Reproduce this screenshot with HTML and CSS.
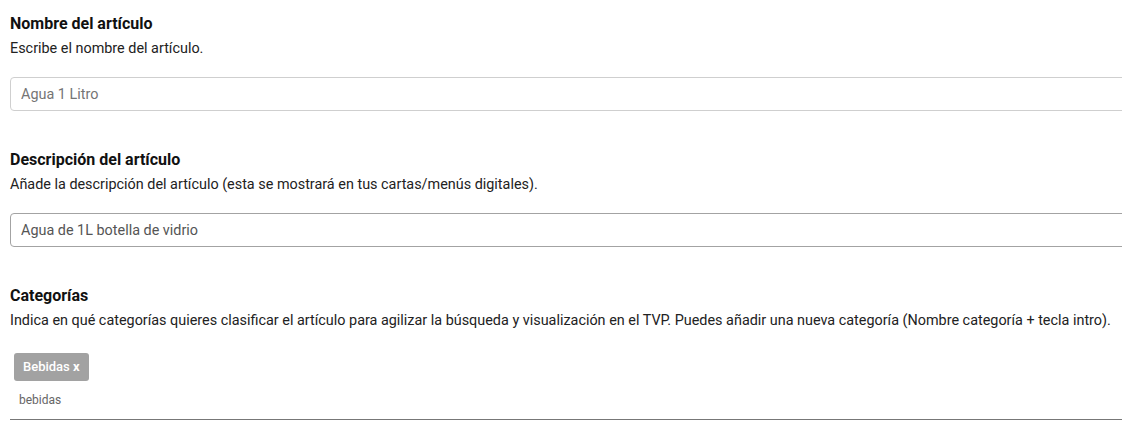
FILE: index.html
```html
<!DOCTYPE html>
<html lang="es">
    <head>
        <meta charset="UTF-8">
        <meta name="viewport" content="width=device-width, initial-scale=1.0">
        <title>Artículo</title>
        <link rel="stylesheet" href="styles.css">
    </head>
    <body>
        <div class="form">
            <div class="field">
                <h3>Nombre del artículo</h3>
                <p>Escribe el nombre del artículo.</p>
                <input type="text" placeholder="Agua 1 Litro">
            </div>

            <div class="field">
                <h3>Descripción del artículo</h3>
                <p>Añade la descripción del artículo (esta se mostrará en tus cartas/menús digitales).</p>
                <input type="text" class="active" value="Agua de 1L botella de vidrio">
            </div>

            <div class="field">
                <h3>Categorías</h3>
                <p>Indica en qué categorías quieres clasificar el artículo para agilizar la búsqueda y visualización en el TVP. Puedes añadir una nueva categoría (Nombre categoría + tecla intro).</p>
                <div class="tags">
                    <span class="tag">Bebidas <b>x</b></span>
                </div>
                <div class="tag-input">bebidas</div>
            </div>
        </div>
    </body>
</html>
```

FILE: styles.css
```css
html, body {
    overflow: hidden;
}

body {
    font-family: Roboto, "Liberation Sans", sans-serif;
    margin: 0;
    padding: 0 0 0 10px;
    background: #fff;
    color: #212121;
}

.form {
    margin-right: -20px;
}

.field {
    padding-top: 14px;
    margin-bottom: 25px;
}

h3 {
    font-size: 16px;
    font-weight: 700;
    margin: 0;
    line-height: 20px;
    color: #111;
}

p {
    font-size: 14.4px;
    margin: 6px 0 0;
    line-height: 18px;
    color: #222;
}

input[type="text"] {
    display: block;
    width: 100%;
    box-sizing: border-box;
    height: 34px;
    margin-top: 19px;
    padding: 0 10px;
    border: 1px solid #cfcfcf;
    border-radius: 4px;
    font-family: inherit;
    font-size: 14.4px;
    color: #555;
    outline: none;
}

input::placeholder {
    color: #757575;
}

input.active {
    border-color: #a3a3a3;
}

.tags {
    margin-top: 23px;
    padding-left: 4px;
}

.tag {
    display: inline-block;
    background: #a2a2a2;
    color: #fff;
    font-size: 13px;
    font-weight: 500;
    line-height: 28px;
    padding: 0 9px;
    border-radius: 3px;
    vertical-align: top;
}

.tag-input {
    font-size: 12px;
    color: #666;
    padding: 12px 0 12px 9px;
    border-bottom: 1px solid #777;
}
```
